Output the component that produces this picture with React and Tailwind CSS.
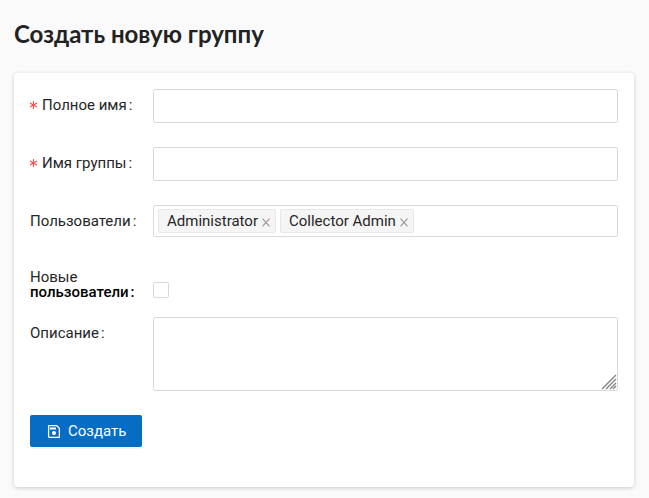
import React from "react";

const inputClass =
  "block w-full min-w-0 rounded-xs border border-[#d9d9d9] bg-white px-3 text-[15px] outline-none focus:border-[#076dc3]";

function Row({ id, label, required, className = "mb-6", children }) {
  return (
    <div className={`flex items-start ${className}`}>
      <label htmlFor={id} className="flex h-8 w-[123px] shrink-0 items-center">
        {required && (
          <svg viewBox="0 0 8 8" className="mr-1 h-2 w-2 shrink-0" stroke="#ff4d4f" fill="none" aria-hidden="true">
            <path d="M3.5 0v8M0 2l7 4M7 2L0 6" strokeWidth="1.1" />
          </svg>
        )}
        {label}
        <span className="ml-0.5">:</span>
      </label>
      <div className="min-w-0 flex-1">{children}</div>
    </div>
  );
}

function Tag({ children }) {
  return (
    <span className="flex h-6 items-center gap-1 rounded-xs border border-[#e8e8e8] bg-[#f5f5f5] pr-[5px] pl-2">
      {children}
      <button type="button" aria-label={`Удалить ${children}`} className="pt-0.5 text-[#999]">
        <svg viewBox="0 0 8 9" className="h-[9px] w-2" stroke="currentColor" fill="none">
          <path d="M0.5 0.7l7 7.6M7.5 0.7l-7 7.6" strokeWidth="1.2" />
        </svg>
      </button>
    </span>
  );
}

export default function App() {
  return (
    <main className="min-h-screen bg-[#fafafa] pt-[17px] pr-[15px] pb-[11px] pl-[14px] font-[Roboto,sans-serif] text-[15px] leading-6 text-[#262626]">
      <h1 className="mb-[23px] font-[Lato,sans-serif] text-2xl leading-[33px] font-bold text-[#222]">
        Создать новую группу
      </h1>
      <form className="rounded-sm bg-white px-4 pt-4 pb-10 shadow-[0_1px_4px_rgba(0,21,41,0.2)]">
        <Row id="fullname" label="Полное имя" required>
          <input id="fullname" type="text" required className={`${inputClass} h-[34px]`} />
        </Row>
        <Row id="groupname" label="Имя группы" required>
          <input id="groupname" type="text" required className={`${inputClass} h-[34px]`} />
        </Row>
        <Row id="users" label="Пользователи" className="mb-[33px]">
          <div className="flex h-8 items-center gap-1 rounded-xs border border-[#d9d9d9] px-1">
            <Tag>Administrator</Tag>
            <Tag>Collector Admin</Tag>
            <input id="users" type="text" className="min-w-0 flex-1 outline-none" />
          </div>
        </Row>
        <div className="mb-[17px] flex items-end">
          <label htmlFor="newusers" className="w-[123px] shrink-0 leading-[15px]">
            Новые
            <br />
            <span className="font-medium text-black">
              пользователи<span className="ml-0.5">:</span>
            </span>
          </label>
          <input
            id="newusers"
            type="checkbox"
            className="mb-0.5 h-4 w-4 appearance-none rounded-xs border border-[#d9d9d9] bg-white checked:bg-[#076dc3]"
          />
        </div>
        <Row id="description" label="Описание">
          <div className="relative">
            <textarea id="description" className={`${inputClass} h-[74px] resize-none py-1`} />
            <svg
              viewBox="0 0 16 16"
              className="pointer-events-none absolute right-px bottom-px h-4 w-4"
              stroke="#808080"
              fill="none"
              aria-hidden="true"
            >
              <path d="M1 15L15 1M5 15L15 5M9 15l6-6M12 15l3-3" strokeWidth="1.3" />
            </svg>
          </div>
        </Row>
        <button
          type="submit"
          className="flex h-8 items-center gap-2 rounded-xs bg-[#076dc3] px-4 text-white shadow-[0_2px_0_rgba(0,0,0,0.04)]"
        >
          <svg viewBox="0 0 14 14" className="h-[14px] w-[14px]" stroke="currentColor" fill="none" aria-hidden="true">
            <path d="M3 1.6h7.6l2.8 2.8V12.4a1 1 0 0 1-1 1H3.6a1 1 0 0 1-1-1V2z" strokeWidth="1.3" />
            <path d="M4 4.5h6" strokeWidth="2" />
            <circle cx="8" cy="9" r="2" fill="currentColor" stroke="none" />
          </svg>
          Создать
        </button>
      </form>
    </main>
  );
}
